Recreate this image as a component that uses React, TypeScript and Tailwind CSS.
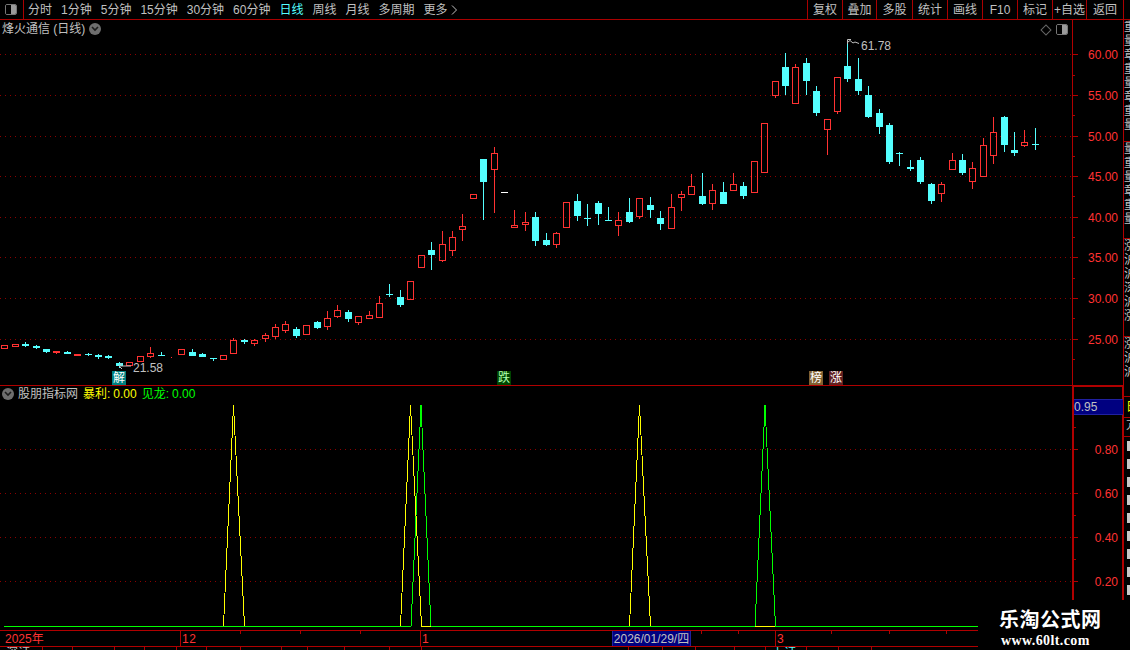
import React from "react";

type Candle = [string, number, number, number, number, number];

// kind, x, body top, body bottom, high, low (page pixels)
const candles: Candle[] = [
  ["r", 4, 345, 349, 345, 349], ["r", 15, 344, 347, 344, 347], ["c", 25, 344, 346, 342, 347],
  ["c", 36, 346, 348, 345, 349], ["c", 46, 349, 352, 349, 353], ["r", 56, 351, 353, 351, 354],
  ["c", 67, 352, 354, 351, 354], ["r", 77, 354, 356, 354, 356], ["c", 88, 354, 355, 353, 356],
  ["c", 98, 355, 357, 354, 359], ["c", 108, 356, 358, 355, 359], ["c", 119, 363, 366, 362, 368],
  ["r", 129, 362, 366, 362, 366], ["r", 140, 356, 362, 356, 362], ["r", 150, 353, 357, 347, 358],
  ["c", 161, 355, 355, 352, 356], ["r", 171, 356, 357, 356, 358], ["r", 181, 349, 355, 349, 355],
  ["c", 192, 352, 356, 349, 356], ["c", 202, 354, 357, 353, 357], ["c", 213, 358, 358, 358, 361],
  ["r", 223, 355, 360, 355, 360], ["r", 233, 340, 354, 338, 354], ["c", 244, 340, 342, 339, 344],
  ["r", 254, 340, 344, 339, 346], ["r", 265, 335, 339, 333, 342], ["r", 275, 327, 337, 324, 339],
  ["r", 285, 324, 331, 321, 333], ["c", 296, 329, 336, 327, 338], ["r", 306, 325, 335, 325, 335],
  ["c", 317, 322, 328, 321, 329], ["r", 327, 318, 327, 311, 330], ["r", 337, 310, 317, 305, 318],
  ["c", 348, 312, 319, 310, 322], ["r", 358, 316, 323, 316, 325], ["r", 369, 315, 319, 311, 319],
  ["r", 379, 303, 318, 296, 318], ["c", 389, 294, 294, 284, 297], ["c", 400, 297, 305, 290, 307],
  ["r", 410, 281, 300, 281, 300], ["r", 421, 255, 268, 255, 268], ["c", 431, 250, 255, 242, 270],
  ["r", 442, 244, 261, 231, 262], ["r", 452, 237, 251, 231, 256], ["r", 462, 226, 230, 214, 241],
  ["r", 473, 194, 199, 194, 199], ["c", 483, 159, 182, 159, 220], ["r", 494, 153, 170, 147, 213],
  ["w", 504, 192, 192, 192, 192], ["r", 514, 225, 228, 210, 228], ["r", 525, 222, 225, 212, 231],
  ["c", 535, 217, 241, 212, 246], ["c", 546, 240, 245, 233, 246], ["r", 556, 233, 245, 232, 248],
  ["r", 566, 202, 228, 202, 228], ["c", 577, 201, 216, 194, 221], ["c", 587, 218, 218, 204, 226],
  ["c", 598, 203, 214, 201, 225], ["c", 608, 220, 220, 207, 220], ["r", 618, 220, 226, 212, 236],
  ["c", 629, 212, 222, 198, 223], ["r", 639, 198, 217, 198, 219], ["c", 650, 205, 210, 197, 218],
  ["c", 660, 218, 224, 211, 230], ["r", 671, 207, 229, 194, 229], ["r", 681, 194, 198, 191, 211],
  ["r", 691, 186, 195, 174, 195], ["c", 702, 196, 204, 173, 205], ["r", 712, 190, 204, 184, 210],
  ["c", 723, 192, 204, 182, 204], ["r", 733, 184, 191, 173, 191], ["c", 743, 186, 196, 182, 199],
  ["r", 754, 161, 193, 161, 193], ["r", 764, 123, 173, 123, 173], ["r", 775, 81, 96, 81, 98],
  ["c", 785, 67, 86, 53, 95], ["r", 795, 67, 104, 64, 104], ["c", 806, 63, 81, 58, 95],
  ["c", 816, 91, 113, 86, 116], ["r", 827, 119, 130, 119, 155], ["r", 837, 77, 112, 77, 114],
  ["c", 847, 66, 79, 40, 82], ["c", 858, 79, 91, 58, 95], ["c", 868, 95, 117, 86, 118],
  ["c", 879, 113, 127, 109, 134], ["c", 889, 125, 162, 123, 164], ["c", 899, 153, 153, 152, 166],
  ["c", 910, 167, 169, 160, 171], ["c", 920, 160, 182, 157, 184], ["c", 931, 184, 201, 183, 204],
  ["r", 941, 184, 194, 182, 202], ["r", 952, 160, 170, 153, 170], ["c", 962, 160, 173, 154, 175],
  ["r", 972, 168, 182, 162, 189], ["r", 983, 145, 177, 138, 177], ["r", 993, 132, 156, 117, 164],
  ["c", 1004, 117, 145, 116, 152], ["c", 1014, 150, 153, 132, 156], ["r", 1024, 142, 146, 130, 147],
  ["c", 1035, 144, 144, 128, 150],
];

const RED = "#ff3232";
const CYAN = "#54ffff";
const AXIS = "#b00000";
const DOT = "#8c0000";

const periods = [
  { label: "分时" }, { label: "1分钟" }, { label: "5分钟" }, { label: "15分钟" }, { label: "30分钟" },
  { label: "60分钟" }, { label: "日线", active: true }, { label: "周线" }, { label: "月线" }, { label: "多周期" },
];

const tools = [
  { label: "复权", w: 35 }, { label: "叠加", w: 34 }, { label: "多股", w: 36 }, { label: "统计", w: 35 },
  { label: "画线", w: 35 }, { label: "F10", w: 35 }, { label: "标记", w: 35 }, { label: "+自选", w: 34 },
  { label: "返回", w: 37 },
];

const priceTicks = [
  { y: 54, label: "60.00" }, { y: 95, label: "55.00" }, { y: 136, label: "50.00" }, { y: 176, label: "45.00" },
  { y: 217, label: "40.00" }, { y: 257, label: "35.00" }, { y: 298, label: "30.00" }, { y: 339, label: "25.00" },
];
const minorTicks = [75, 115, 156, 196, 237, 278, 318, 359];
const ratioTicks = [
  { y: 449, label: "0.80" }, { y: 493, label: "0.60" }, { y: 537, label: "0.40" }, { y: 581, label: "0.20" },
];

const statusStops = [43, 30, 42, 30, 32, 30, 34, 41, 26, 37, 45, 32, 207, 34, 33, 39, 31, 41, 32, 33];

function CandleMark({ c }: { c: Candle }) {
  const [kind, x, top, bottom, high, low] = c;
  const color = kind === "r" ? RED : kind === "c" ? CYAN : "#ffffff";
  const wick = x + 0.5;
  if (top === bottom) {
    return (
      <g stroke={color}>
        {high < low && <line x1={wick} x2={wick} y1={high} y2={low} />}
        <line x1={x - 3} x2={x + 4} y1={top + 0.5} y2={top + 0.5} />
      </g>
    );
  }
  if (kind === "r") {
    return (
      <g stroke={color} fill="none">
        {high < top && <line x1={wick} x2={wick} y1={high} y2={top} />}
        {low > bottom && <line x1={wick} x2={wick} y1={bottom} y2={low} />}
        <rect x={x - 2.5} y={top + 0.5} width={6} height={bottom - top - 1} />
      </g>
    );
  }
  return (
    <g>
      <line x1={wick} x2={wick} y1={high} y2={low} stroke={color} />
      <rect x={x - 3} y={top} width={7} height={bottom - top} fill={color} />
    </g>
  );
}

function PanelToggle() {
  return (
    <span className="flex h-[12px] w-[12px] items-center justify-center rounded-full bg-[#6e6e6e]">
      <svg width="8" height="6" viewBox="0 0 8 6" fill="none" stroke="#1c1c1c" strokeWidth="1.6">
        <path d="M1 1 L4 4 L7 1" />
      </svg>
    </span>
  );
}

function SplitIcon() {
  return (
    <span className="flex h-[11px] w-[12px] overflow-hidden rounded-[2px] border border-[#777777]">
      <span className="flex-1 bg-black" />
      <span className="w-[5px] bg-[#9a9a9a]" />
    </span>
  );
}

function Signal({ text, box, ink }: { text: string; box: string; ink: string }) {
  return (
    <span className={`flex h-[14px] w-[14px] items-center justify-center text-[12px] leading-none ${box} ${ink}`}>
      {text}
    </span>
  );
}

const stripTop = ["重", "量", "章", "重", "量", "章", "重", "量"];
const stripMid = ["量", "重", "量", "章", "重", "量"];
const stripLow = ["涨", "沪", "沪", "深", "沪", "涨"];

export default function App() {
  return (
    <div className="relative flex h-[650px] w-[1130px] flex-col overflow-hidden bg-black font-['Liberation_Sans','Noto_Sans_CJK_SC',sans-serif] text-[12px] text-[#c0c0c0]">
      {/* toolbar */}
      <div className="flex h-[20px] shrink-0 items-stretch border-b border-[#aa0000]">
        <div className="flex w-[24px] shrink-0 items-center border-r border-[#aa0000] pl-[5px]">
          <SplitIcon />
        </div>
        <div className="flex flex-1 items-center gap-[9px] pl-[4px] leading-none">
          {periods.map((p) => (
            <span key={p.label} className={p.active ? "text-[#54ffff]" : ""}>
              {p.label}
            </span>
          ))}
          <span className="flex items-center gap-[3px]">
            更多
            <svg width="7" height="10" viewBox="0 0 7 10" fill="none" stroke="#c0c0c0">
              <path d="M1 0.5 L5.5 5 L1 9.5" />
            </svg>
          </span>
        </div>
        <div className="flex items-stretch border-r border-[#aa0000] pr-0">
          {tools.map((t) => (
            <span
              key={t.label}
              className="flex items-center justify-center border-l border-[#aa0000] leading-none"
              style={{ width: t.w }}
            >
              {t.label}
            </span>
          ))}
        </div>
        <div className="w-[6px] shrink-0" />
      </div>

      {/* price panel */}
      <div className="flex h-[366px] shrink-0">
        <div className="relative h-full w-[1072px] shrink-0">
          <svg width="1072" height="366" viewBox="0 20 1072 366" className="block">
            <g stroke={DOT} strokeDasharray="1 4">
              {priceTicks.map((t) => (
                <line key={t.y} x1="0" x2="1072" y1={t.y + 0.5} y2={t.y + 0.5} />
              ))}
            </g>
            <g shapeRendering="crispEdges">
              {candles.map((c) => (
                <CandleMark key={c[1]} c={c} />
              ))}
            </g>
            {/* high and low marks */}
            <path d="M847.5 44 V39.5 H851 M848 42 L850 40.5 L853 43 L855 42 L859 43.5" fill="none" stroke="#c0c0c0" />
            <text x="861" y="50" fill="#c0c0c0" fontSize="12">61.78</text>
            <path d="M131 366 H119 M119 366 L122 363 M119 366 L122 369" fill="none" stroke="#c0c0c0" />
            <text x="133" y="372" fill="#c0c0c0" fontSize="12">21.58</text>
            <line x1="0" x2="1072" y1="385.5" y2="385.5" stroke={AXIS} />
          </svg>
          <div className="absolute left-[2px] top-[3px] flex items-center gap-[4px] leading-none">
            <span>烽火通信 (日线)</span>
            <PanelToggle />
          </div>
          <div className="absolute right-[4px] top-[4px] flex items-center gap-[6px]">
            <span className="h-[8px] w-[8px] rotate-45 border border-[#666666]" />
            <SplitIcon />
          </div>
          <div className="absolute left-[112px] top-[351px]">
            <Signal text="解" box="bg-[#008080]" ink="text-white" />
          </div>
          <div className="absolute left-[497px] top-[351px]">
            <Signal text="跌" box="bg-[#004400]" ink="text-[#b0ffb0]" />
          </div>
          <div className="absolute left-[809px] top-[351px]">
            <Signal text="榜" box="bg-[#806030]" ink="text-white" />
          </div>
          <div className="absolute left-[829px] top-[351px]">
            <Signal text="涨" box="bg-[#602020]" ink="text-white" />
          </div>
        </div>
        <svg width="52" height="366" viewBox="1072 20 52 366" className="block shrink-0">
          <g stroke={AXIS} shapeRendering="crispEdges">
            <line x1="1072.5" x2="1072.5" y1="20" y2="386" />
            <line x1="1123.5" x2="1123.5" y1="20" y2="386" />
            {priceTicks.map((t) => (
              <line key={t.y} x1="1072" x2="1078" y1={t.y + 0.5} y2={t.y + 0.5} />
            ))}
            {minorTicks.map((y) => (
              <line key={y} x1="1072" x2="1075" y1={y + 0.5} y2={y + 0.5} />
            ))}
            <line x1="1072" x2="1124" y1="385.5" y2="385.5" />
          </g>
          {priceTicks.map((t) => (
            <text key={t.y} x="1118" y={t.y + 5} textAnchor="end" fill={RED} fontSize="12">
              {t.label}
            </text>
          ))}
        </svg>
        <div className="flex w-[6px] flex-col overflow-hidden leading-[14px]">
          <div className="flex h-[122px] flex-col overflow-hidden border-b border-[#aa0000]">
            {stripTop.map((s, i) => (
              <span key={i} className="whitespace-nowrap">{s}</span>
            ))}
          </div>
          <div className="flex h-[97px] flex-col overflow-hidden border-b border-[#aa0000]">
            {stripMid.map((s, i) => (
              <span key={i} className="whitespace-nowrap">{s}</span>
            ))}
          </div>
          <div className="flex h-[98px] flex-col overflow-hidden border-b border-[#aa0000]">
            {stripLow.map((s, i) => (
              <span key={i} className="whitespace-nowrap">{s}</span>
            ))}
          </div>
          <div className="flex flex-col overflow-hidden">
            {stripLow.slice(0, 3).map((s, i) => (
              <span key={i} className="whitespace-nowrap">{s}</span>
            ))}
          </div>
        </div>
      </div>

      {/* indicator panel */}
      <div className="flex h-[244px] shrink-0">
        <div className="relative h-full w-[1072px] shrink-0">
          <svg width="1072" height="244" viewBox="0 386 1072 244" className="block">
            <g stroke={DOT} strokeDasharray="1 4">
              {ratioTicks.map((t) => (
                <line key={t.y} x1="0" x2="1072" y1={t.y + 0.5} y2={t.y + 0.5} />
              ))}
            </g>
            <g fill="none" shapeRendering="crispEdges">
              <path d="M4 626.5 H411 L421 405 L431 626.5 H755 L765 405 L775.5 626.5 H978" stroke="#00ff00" />
              <path d="M421 626.5 H431 M755 626.5 H775" stroke="#ffff00" />
              <path d="M223.5 626 L233.5 405 L244.5 626" stroke="#ffff00" />
              <path d="M400.5 626 L410.5 405 L421.5 626" stroke="#ffff00" />
              <path d="M629.5 626 L639.5 405 L650.5 626" stroke="#ffff00" />
            </g>
          </svg>
          <div className="absolute left-[2px] top-[2px] flex items-center leading-none">
            <PanelToggle />
            <span className="ml-[4px]">股朋指标网</span>
            <span className="ml-[5px] text-[#ffff00]">暴利:</span>
            <span className="ml-[3px] text-[#ffff00]">0.00</span>
            <span className="ml-[5px] text-[#00ff00]">见龙:</span>
            <span className="ml-[3px] text-[#00ff00]">0.00</span>
          </div>
        </div>
        <div className="relative h-full w-[52px] shrink-0">
          <svg width="52" height="244" viewBox="1072 386 52 244" className="block">
            <g stroke={AXIS} shapeRendering="crispEdges">
              <line x1="1073" x2="1073" y1="386" y2="630" strokeWidth="2" />
              <line x1="1123" x2="1123" y1="386" y2="630" strokeWidth="2" />
              <line x1="1072" x2="1124" y1="386.5" y2="386.5" />
              <line x1="1072" x2="1076" y1="427.5" y2="427.5" />
              {ratioTicks.map((t) => (
                <line key={t.y} x1="1072" x2="1078" y1={t.y + 0.5} y2={t.y + 0.5} />
              ))}
              <line x1="1072" x2="1076" y1="515.5" y2="515.5" />
              <line x1="1072" x2="1076" y1="559.5" y2="559.5" />
            </g>
            {ratioTicks.map((t) => (
              <text key={t.y} x="1118" y={t.y + 5} textAnchor="end" fill={RED} fontSize="12">
                {t.label}
              </text>
            ))}
          </svg>
          <div className="absolute left-[2px] top-[13px] flex h-[16px] w-[49px] items-center border-y border-[#2020a0] bg-[#000080] leading-none">
            0.95
          </div>
        </div>
        <div className="flex w-[6px] flex-col overflow-hidden">
          <div className="h-[11px] border-b border-[#aa0000]" />
          <div className="flex h-[21px] items-center border-b border-[#aa0000] pl-[2px] leading-none text-[#ffff00]">
            日
          </div>
          <div className="h-[19px] overflow-hidden border-b border-[#aa0000] pl-[2px] leading-[14px]">亢</div>
          {[0, 1, 2, 3, 4, 5, 6, 7, 8, 9].map((i) => (
            <div key={i} className="flex h-[18px] shrink-0 items-center pl-[3px]">
              <span className="h-[10px] w-[3px] bg-[#c8c8c8]" />
            </div>
          ))}
        </div>
      </div>

      {/* time axis */}
      <div className="relative flex h-[17px] shrink-0 items-center border-y border-[#b00000] text-[#ff3232] leading-none">
        <span className="absolute left-[5px]">2025年</span>
        <span className="absolute left-[180px] top-0 flex h-full items-center border-l border-[#b00000] pl-[1px] tracking-[0.5px]">12</span>
        <span className="absolute left-[240px] top-0 h-[3px] border-l border-[#b00000]" />
        <span className="absolute left-[300px] top-0 h-[3px] border-l border-[#b00000]" />
        <span className="absolute left-[360px] top-0 h-[3px] border-l border-[#b00000]" />
        <span className="absolute left-[420px] top-0 flex h-full items-center border-l border-[#b00000] pl-[1px]">1</span>
        <span className="absolute left-[612px] top-0 flex h-full w-[79px] items-center justify-center border-x border-[#2020a0] bg-[#000080] text-[#c0c0c0]">
          2026/01/29/四
        </span>
        <span className="absolute left-[701px] top-0 h-[3px] border-l border-[#b00000]" />
        <span className="absolute left-[738px] top-0 h-[3px] border-l border-[#b00000]" />
        <span className="absolute left-[775px] top-0 flex h-full items-center border-l border-[#b00000] pl-[1px]">3</span>
        <span className="absolute left-[831px] top-0 h-[3px] border-l border-[#b00000]" />
        <span className="absolute left-[889px] top-0 h-[3px] border-l border-[#b00000]" />
        <span className="absolute left-[946px] top-0 h-[3px] border-l border-[#b00000]" />
      </div>

      {/* status row, only its top edge is in frame */}
      <div className="flex h-[3px] shrink-0 overflow-hidden">
        {statusStops.map((w, i) => (
          <span key={i} className="h-full shrink-0 overflow-hidden border-r border-[#b00000] pl-[6px] leading-[12px]" style={{ width: w }}>
            {i === 0 ? "深证" : i === 17 ? <span className="text-[#54ffff]">上证</span> : ""}
          </span>
        ))}
      </div>

      {/* site watermark pasted on the capture */}
      <div className="absolute left-[978px] top-[600px] flex h-[50px] w-[152px] flex-col items-start bg-black pl-[21px] pt-[9px] text-white">
        <span className="text-[20px] font-bold leading-[22px] tracking-[0.5px]">乐淘公式网</span>
        <span className="mt-[2px] pl-[2px] font-['Liberation_Serif',serif] text-[14px] font-bold leading-[16px] tracking-[0.4px]">www.60lt.com</span>
      </div>
    </div>
  );
}
